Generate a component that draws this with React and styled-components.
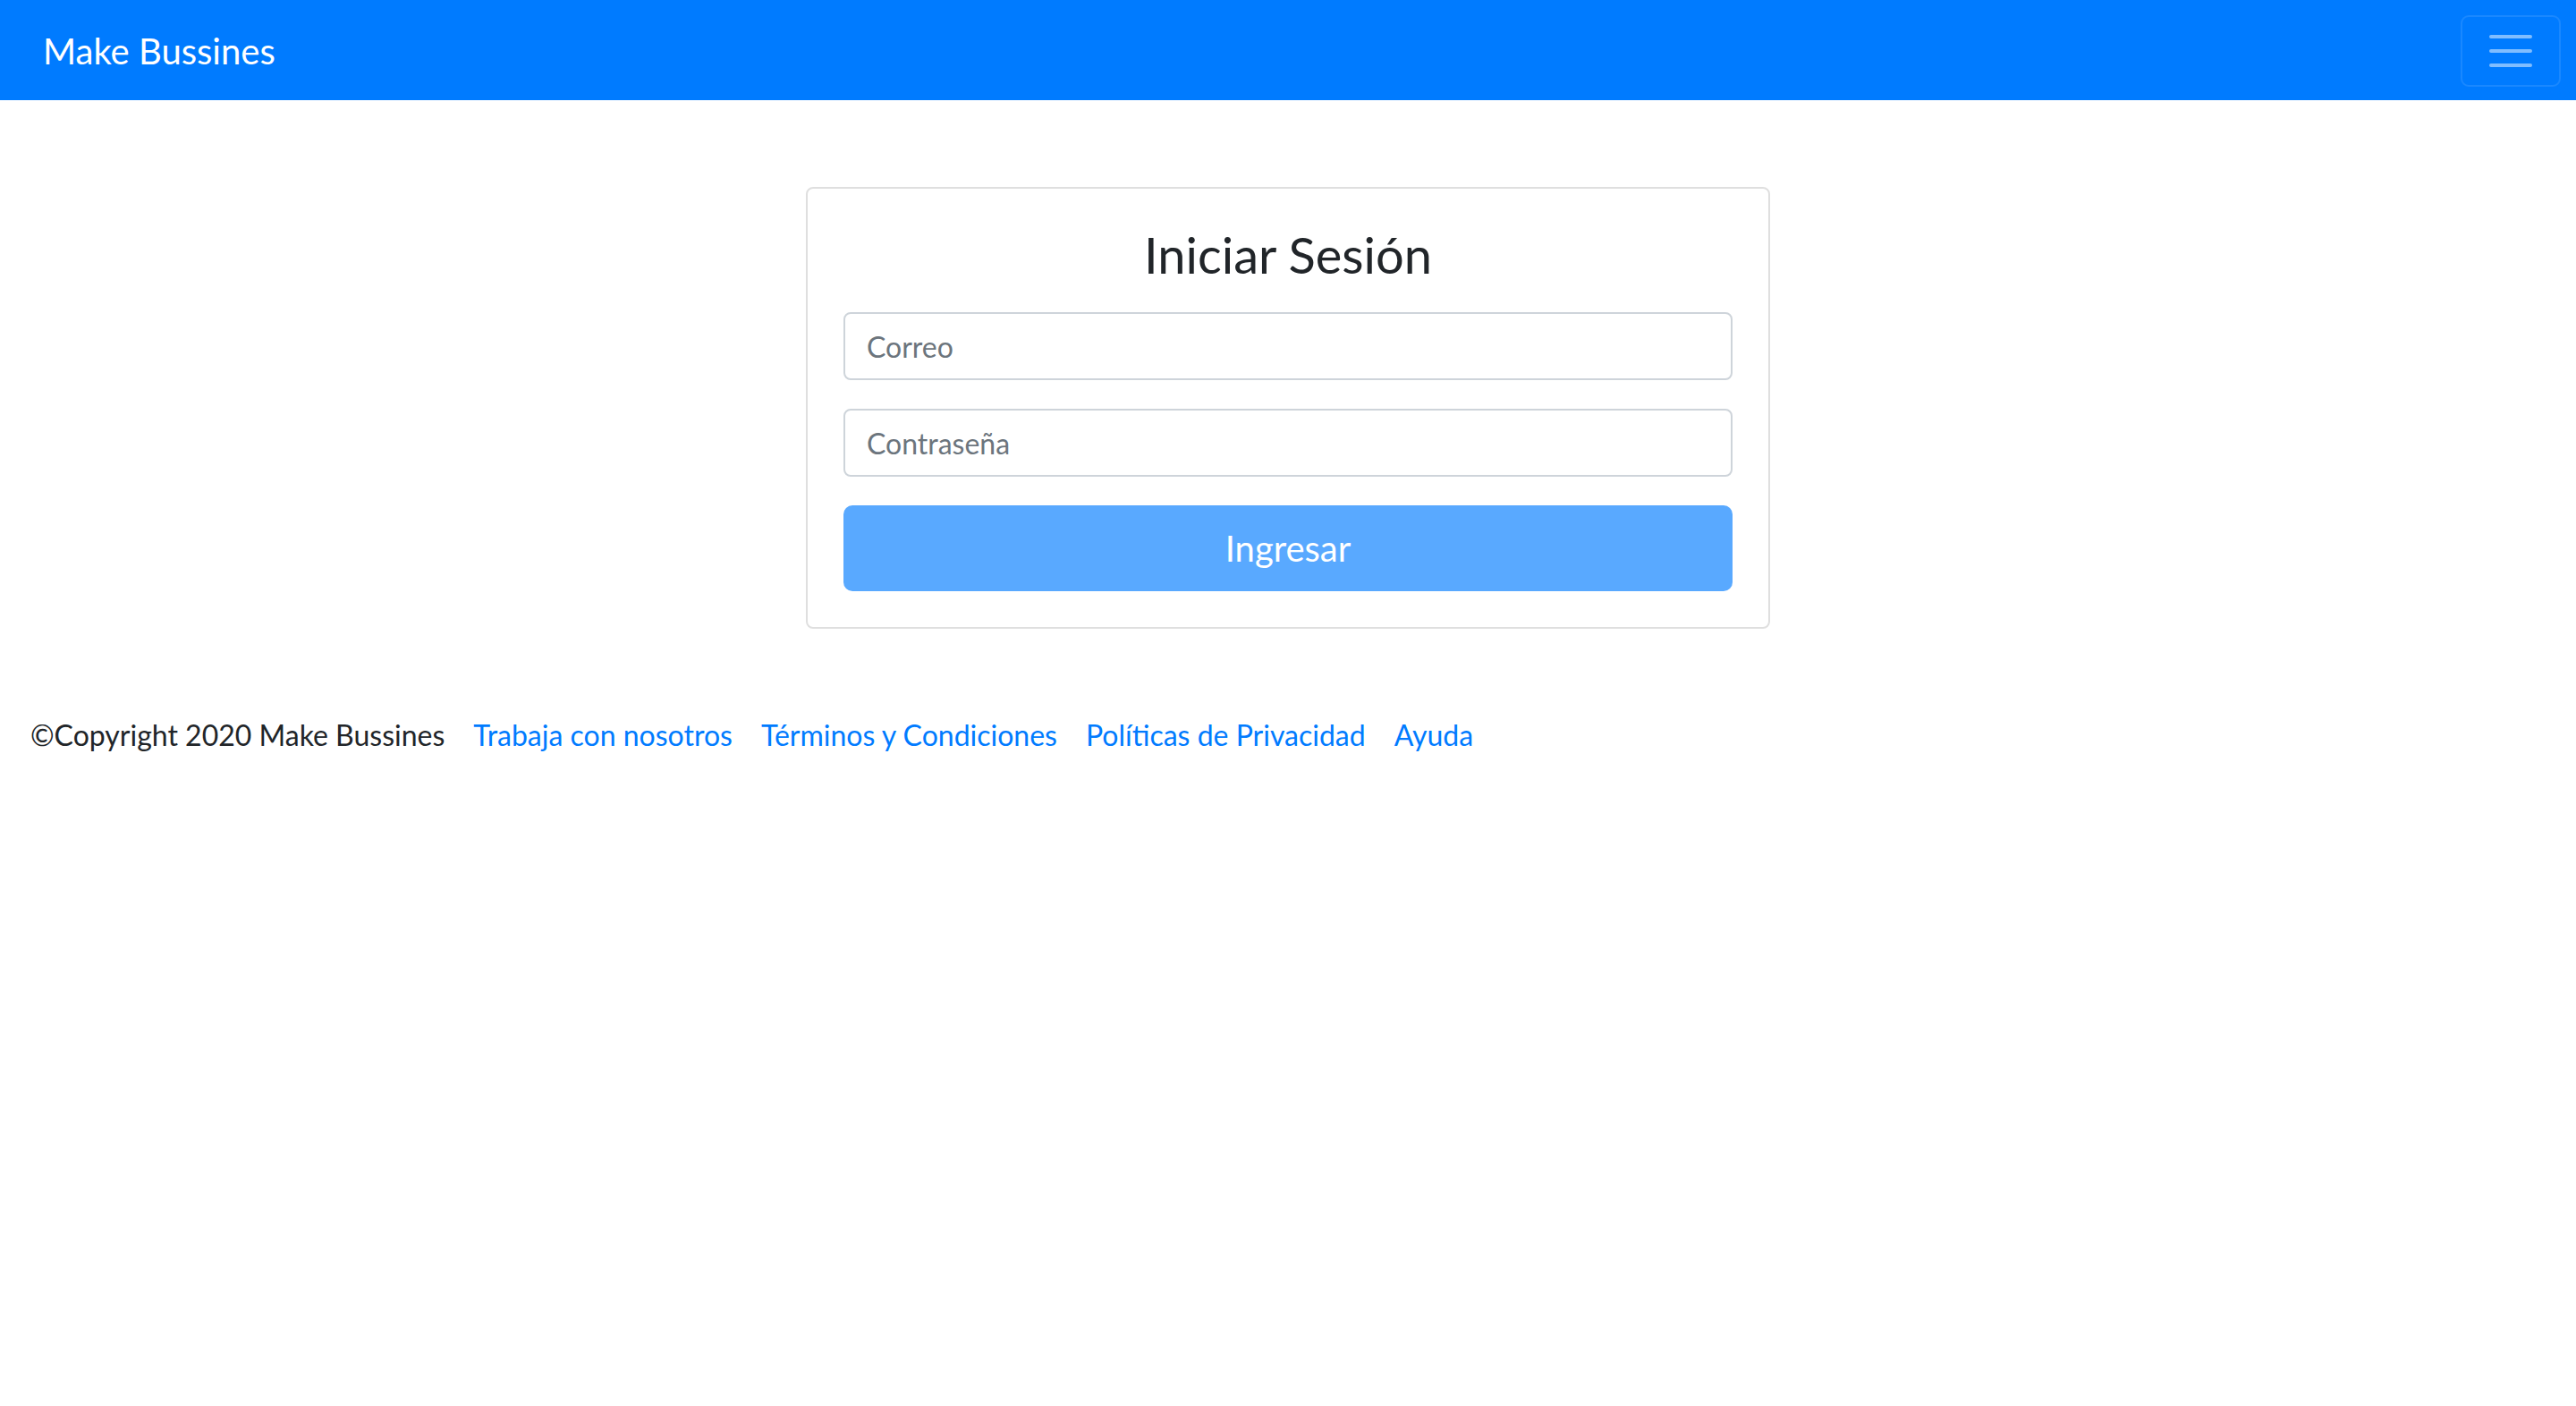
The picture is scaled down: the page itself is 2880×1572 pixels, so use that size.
import React from 'react';
import styled, { createGlobalStyle } from 'styled-components';

const COLORS = {
  primary: '#007bff',
  primaryDisabled: '#59a9ff',
  text: '#212529',
  muted: '#6c757d',
  inputBorder: '#ced4da',
  cardBorder: 'rgba(0, 0, 0, 0.125)',
  white: '#ffffff',
};

const FONT = 'Lato, "Open Sans", "Liberation Sans", sans-serif';

const GlobalStyle = createGlobalStyle`
  * {
    box-sizing: border-box;
  }

  body {
    margin: 0;
    font-family: ${FONT};
    color: ${COLORS.text};
    background: ${COLORS.white};
  }
`;

const links = [
  'Trabaja con nosotros',
  'Términos y Condiciones',
  'Políticas de Privacidad',
  'Ayuda',
];

const App = () => {
  return (
    <>
      <GlobalStyle />
      <Navbar>
        <Brand href="#">Make Bussines</Brand>
        <Toggler type="button" aria-label="Toggle navigation">
          <svg width="60" height="60" viewBox="0 0 30 30">
            <path
              d="M4 7h22M4 15h22M4 23h22"
              stroke="rgba(255,255,255,0.5)"
              strokeWidth="2"
              strokeLinecap="round"
              fill="none"
            />
          </svg>
        </Toggler>
      </Navbar>

      <Main>
        <Card>
          <Title>Iniciar Sesión</Title>
          <Field type="email" placeholder="Correo" />
          <Field type="password" placeholder="Contraseña" />
          <SubmitButton type="submit" disabled>
            Ingresar
          </SubmitButton>
        </Card>
      </Main>

      <Footer>
        <span>©Copyright 2020 Make Bussines</span>
        {links.map((label) => (
          <FooterLink key={label} href="#">
            {label}
          </FooterLink>
        ))}
      </Footer>
    </>
  );
};

export default App;

const Navbar = styled.nav`
  display: flex;
  align-items: center;
  justify-content: space-between;
  height: 112px;
  padding: 0 17px 0 48px;
  background-color: ${COLORS.primary};
`;

const Brand = styled.a`
  font-size: 40px;
  line-height: 60px;
  color: ${COLORS.white};
  text-decoration: none;
  margin-top: 2px;
`;

const Toggler = styled.button`
  display: flex;
  align-items: center;
  justify-content: center;
  width: 112px;
  height: 80px;
  padding: 0;
  background: transparent;
  border: 2px solid rgba(255, 255, 255, 0.1);
  border-radius: 9px;
  margin-top: 1px;
`;

const Main = styled.main`
  display: flex;
  justify-content: center;
  padding-top: 97px;
`;

const Card = styled.form`
  display: flex;
  flex-direction: column;
  gap: 32px;
  width: 1078px;
  padding: 40px;
  border: 2px solid ${COLORS.cardBorder};
  border-radius: 8px;
`;

const Title = styled.h3`
  margin: 0 0 -1px;
  font-size: 56px;
  font-weight: 400;
  line-height: 67px;
  text-align: center;
  color: ${COLORS.text};
`;

const Field = styled.input`
  height: 76px;
  padding: 0 24px;
  font-family: ${FONT};
  font-size: 32px;
  color: ${COLORS.text};
  border: 2px solid ${COLORS.inputBorder};
  border-radius: 8px;
  outline: none;

  &::placeholder {
    color: ${COLORS.muted};
  }
`;

const SubmitButton = styled.button`
  height: 96px;
  font-family: ${FONT};
  font-size: 40px;
  color: ${COLORS.white};
  background-color: ${COLORS.primaryDisabled};
  border: none;
  border-radius: 10px;
`;

const Footer = styled.footer`
  display: flex;
  align-items: baseline;
  gap: 32px;
  margin-top: 95px;
  padding: 0 34px;
  font-size: 32px;
  line-height: 48px;
`;

const FooterLink = styled.a`
  color: ${COLORS.primary};
  text-decoration: none;
`;
